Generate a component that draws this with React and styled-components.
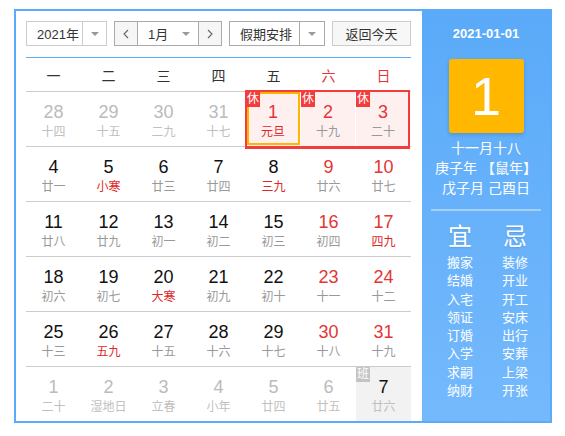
import React from 'react';
import styled, { createGlobalStyle } from 'styled-components';

const GlobalStyle = createGlobalStyle`
  body {
    margin: 0;
    font-family: "Liberation Sans", "Noto Sans CJK SC", sans-serif;
    background: #fff;
  }
`;

const weekDays = ['一', '二', '三', '四', '五', '六', '日'];

// tone: o = other month, w = weekend; red = red lunar text
const rows = [
  [
    { d: 28, l: '十四', tone: 'o' },
    { d: 29, l: '十五', tone: 'o' },
    { d: 30, l: '二九', tone: 'o' },
    { d: 31, l: '十七', tone: 'o' },
    { d: 1, l: '元旦', red: true, rest: true, selected: true },
    { d: 2, l: '十九', tone: 'w', rest: true },
    { d: 3, l: '二十', tone: 'w', rest: true },
  ],
  [
    { d: 4, l: '廿一' },
    { d: 5, l: '小寒', red: true },
    { d: 6, l: '廿三' },
    { d: 7, l: '廿四' },
    { d: 8, l: '三九', red: true },
    { d: 9, l: '廿六', tone: 'w' },
    { d: 10, l: '廿七', tone: 'w' },
  ],
  [
    { d: 11, l: '廿八' },
    { d: 12, l: '廿九' },
    { d: 13, l: '初一' },
    { d: 14, l: '初二' },
    { d: 15, l: '初三' },
    { d: 16, l: '初四', tone: 'w' },
    { d: 17, l: '四九', tone: 'w', red: true },
  ],
  [
    { d: 18, l: '初六' },
    { d: 19, l: '初七' },
    { d: 20, l: '大寒', red: true },
    { d: 21, l: '初九' },
    { d: 22, l: '初十' },
    { d: 23, l: '十一', tone: 'w' },
    { d: 24, l: '十二', tone: 'w' },
  ],
  [
    { d: 25, l: '十三' },
    { d: 26, l: '五九', red: true },
    { d: 27, l: '十五' },
    { d: 28, l: '十六' },
    { d: 29, l: '十七' },
    { d: 30, l: '十八', tone: 'w' },
    { d: 31, l: '十九', tone: 'w' },
  ],
  [
    { d: 1, l: '二十', tone: 'o' },
    { d: 2, l: '湿地日', tone: 'o' },
    { d: 3, l: '立春', tone: 'o' },
    { d: 4, l: '小年', tone: 'o' },
    { d: 5, l: '廿四', tone: 'o' },
    { d: 6, l: '廿五', tone: 'o' },
    { d: 7, l: '廿六', work: true },
  ],
];

const yi = ['搬家', '结婚', '入宅', '领证', '订婚', '入学', '求嗣', '纳财'];
const ji = ['装修', '开业', '开工', '安床', '出行', '安葬', '上梁', '开张'];

const Page = styled.div`
  padding: 9px 0 0 14px;
`;

const Frame = styled.div`
  display: flex;
  width: 538px;
  height: 414px;
  box-sizing: border-box;
  border: 2px solid #5aabf9;
  background: #fff;
`;

const Main = styled.div`
  width: 406px;
  box-sizing: border-box;
  padding: 10px 11px 0 10px;
`;

const Toolbar = styled.div`
  display: flex;
  gap: 7px;
  padding-bottom: 11px;
  border-bottom: 1px solid #5aabf9;
`;

const Select = styled.div`
  display: flex;
  height: 25px;
  box-sizing: border-box;
  border: 1px solid ${(p) => p.$border};
  background: #fff;
  font-size: 13px;
  color: #333;
`;

const SelectText = styled.div`
  width: ${(p) => p.$w}px;
  box-sizing: border-box;
  padding-left: ${(p) => p.$pad}px;
  display: flex;
  align-items: center;
  justify-content: space-between;
  padding-right: ${(p) => (p.$caret ? 8 : 0)}px;
`;

const Triangle = styled.span`
  width: 0;
  height: 0;
  border-left: 4px solid transparent;
  border-right: 4px solid transparent;
  border-top: 4px solid #999;
`;

const Caret = styled.div`
  width: ${(p) => p.$w}px;
  border-left: 1px solid ${(p) => p.$border};
  display: flex;
  align-items: center;
  justify-content: center;
`;

const Arrow = styled.div`
  width: ${(p) => p.$w}px;
  background: #f6f6f6;
  display: flex;
  align-items: center;
  justify-content: center;
  ${(p) => (p.$left ? 'border-right: 1px solid #aaa;' : 'border-left: 1px solid #aaa;')}
`;

const Button = styled.div`
  width: 82px;
  height: 25px;
  box-sizing: border-box;
  border: 1px solid #ccc;
  background: #f7f7f7;
  font-size: 13px;
  color: #333;
  display: flex;
  align-items: center;
  justify-content: center;
`;

const WeekHeader = styled.div`
  display: grid;
  grid-template-columns: repeat(7, 55px);
  height: 33px;
  align-items: center;
  border-bottom: 1px solid #ccc;
  font-size: 14px;
`;

const WeekDay = styled.div`
  text-align: center;
  color: ${(p) => (p.$weekend ? '#e43535' : '#333')};
`;

const Row = styled.div`
  position: relative;
  display: grid;
  grid-template-columns: repeat(7, 55px);
  height: ${(p) => (p.$last ? 54 : 55)}px;
  box-sizing: border-box;
  border-bottom: ${(p) => (p.$last ? 'none' : '1px solid #ccc')};
`;

const Cell = styled.div`
  position: relative;
  box-sizing: border-box;
  padding-top: 10px;
  text-align: center;
  background: ${(p) => (p.$rest ? '#fff0f0' : p.$work ? '#f2f2f2' : 'transparent')};
  border-right: ${(p) => (p.$rest ? '1px solid #fff' : 'none')};

  ${(p) =>
    p.$selected &&
    `&::after {
      content: '';
      position: absolute;
      top: 0;
      left: 1px;
      right: 0;
      bottom: 1px;
      border: 2px solid #ffb400;
    }`}
`;

const Num = styled.div`
  font-size: 18px;
  line-height: 20px;
  color: ${(p) =>
    p.$tone === 'o' ? '#bbb' : p.$tone === 'w' || p.$rest ? '#e43535' : '#111'};
`;

const Lunar = styled.div`
  margin-top: 2px;
  font-size: 12px;
  line-height: 16px;
  color: ${(p) => (p.$tone === 'o' || p.$work ? '#c0c0c0' : p.$red ? '#e02828' : '#999')};
`;

const Badge = styled.span`
  position: absolute;
  top: 0;
  left: 0;
  width: 14px;
  height: 15px;
  font-size: 12px;
  line-height: 15px;
  color: #fff;
  background: ${(p) => p.$bg};
  z-index: 2;
`;

const HolidayOutline = styled.span`
  position: absolute;
  top: -2px;
  left: 219px;
  width: 165px;
  height: 59px;
  box-sizing: border-box;
  border: 2px solid #f53c3c;
  border-bottom-width: 3px;
  pointer-events: none;
  z-index: 1;
`;

const Panel = styled.div`
  flex: 1;
  display: flex;
  flex-direction: column;
  align-items: center;
  padding-top: 15px;
  color: #fff;
  background: linear-gradient(#5aaaf9, #74b9fc);
`;

const DateLine = styled.div`
  font-size: 13px;
  font-weight: bold;
  line-height: 16px;
`;

const DayBox = styled.div`
  margin-top: 17px;
  width: 75px;
  height: 74px;
  border-radius: 3px;
  background: #ffb700;
  box-shadow: 0 2px 4px rgba(0, 0, 0, 0.15);
  display: flex;
  align-items: center;
  justify-content: center;
  font-size: 54px;
`;

const InfoLine = styled.div`
  font-size: 14px;
  line-height: 20px;
  margin-top: ${(p) => p.$mt || 0}px;
  white-space: nowrap;
`;

const Divider = styled.div`
  margin-top: 11px;
  width: 110px;
  height: 2px;
  background: rgba(255, 255, 255, 0.4);
`;

const Advice = styled.div`
  display: flex;
  gap: 15px;
  margin-top: 12px;
  padding-left: 3px;
`;

const AdviceCol = styled.div`
  width: 40px;
  text-align: center;
`;

const AdviceHead = styled.div`
  font-size: 24px;
  line-height: 28px;
  margin-bottom: 3px;
  text-shadow: 0 1px 2px rgba(0, 0, 0, 0.12);
`;

const AdviceItem = styled.div`
  font-size: 13px;
  line-height: 18.3px;
`;

const Chevron = ({ dir }) => (
  <svg width="6" height="10" viewBox="0 0 6 10">
    <polyline
      points={dir === 'left' ? '5,1 1,5 5,9' : '1,1 5,5 1,9'}
      fill="none"
      stroke="#666"
      strokeWidth="1.1"
    />
  </svg>
);

const App = () => {
  return (
    <Page>
      <GlobalStyle />
      <Frame>
        <Main>
          <Toolbar>
            <Select $border="#ccc">
              <SelectText $w={55} $pad={10}>2021年</SelectText>
              <Caret $w={23} $border="#ccc">
                <Triangle />
              </Caret>
            </Select>
            <Select $border="#aaa">
              <Arrow $w={22} $left>
                <Chevron dir="left" />
              </Arrow>
              <SelectText $w={60} $pad={10} $caret>
                1月
                <Triangle />
              </SelectText>
              <Arrow $w={22}>
                <Chevron dir="right" />
              </Arrow>
            </Select>
            <Select $border="#aaa">
              <SelectText $w={69} $pad={10}>假期安排</SelectText>
              <Caret $w={24} $border="#aaa">
                <Triangle />
              </Caret>
            </Select>
            <Button>返回今天</Button>
          </Toolbar>

          <WeekHeader>
            {weekDays.map((w, i) => (
              <WeekDay key={w} $weekend={i > 4}>
                {w}
              </WeekDay>
            ))}
          </WeekHeader>

          {rows.map((row, ri) => (
            <Row key={ri} $last={ri === rows.length - 1}>
              {row.map((c, ci) => (
                <Cell key={ci} $rest={c.rest} $work={c.work} $selected={c.selected}>
                  {c.rest && <Badge $bg="#f53c3c">休</Badge>}
                  {c.work && <Badge $bg="#c4c4c4">班</Badge>}
                  <Num $tone={c.tone} $rest={c.rest}>
                    {c.d}
                  </Num>
                  <Lunar $tone={c.tone} $red={c.red} $work={c.work}>
                    {c.l}
                  </Lunar>
                </Cell>
              ))}
              {ri === 0 && <HolidayOutline />}
            </Row>
          ))}
        </Main>

        <Panel>
          <DateLine>2021-01-01</DateLine>
          <DayBox>1</DayBox>
          <InfoLine $mt={5}>十一月十八</InfoLine>
          <InfoLine>庚子年 【鼠年】</InfoLine>
          <InfoLine>戊子月 己酉日</InfoLine>
          <Divider />
          <Advice>
            <AdviceCol>
              <AdviceHead>宜</AdviceHead>
              {yi.map((t) => (
                <AdviceItem key={t}>{t}</AdviceItem>
              ))}
            </AdviceCol>
            <AdviceCol>
              <AdviceHead>忌</AdviceHead>
              {ji.map((t) => (
                <AdviceItem key={t}>{t}</AdviceItem>
              ))}
            </AdviceCol>
          </Advice>
        </Panel>
      </Frame>
    </Page>
  );
};

export default App;
